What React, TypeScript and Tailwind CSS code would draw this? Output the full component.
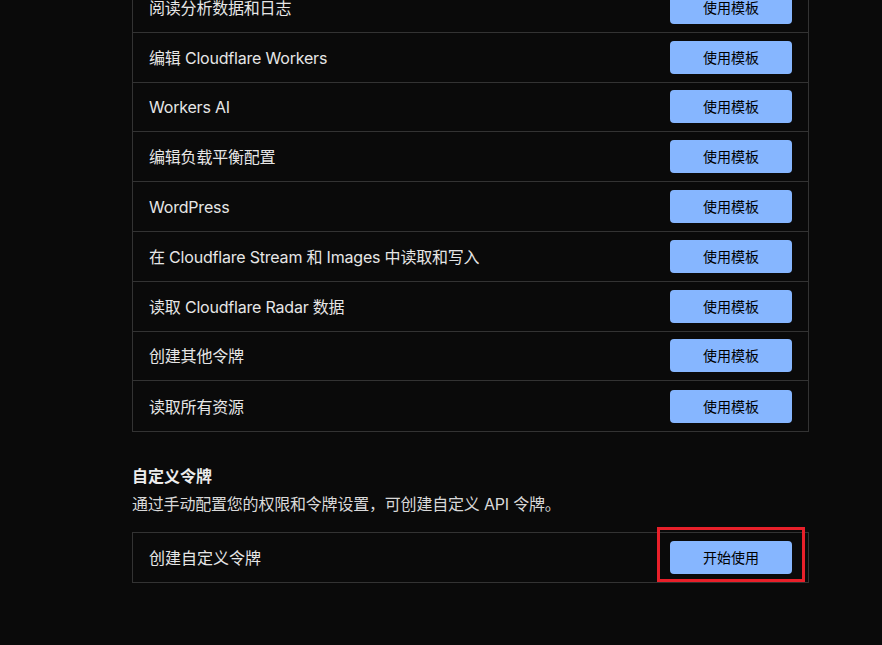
import React from "react";

const rows = [
  "阅读分析数据和日志",
  "编辑 Cloudflare Workers",
  "Workers AI",
  "编辑负载平衡配置",
  "WordPress",
  "在 Cloudflare Stream 和 Images 中读取和写入",
  "读取 Cloudflare Radar 数据",
  "创建其他令牌",
  "读取所有资源",
];

const font = { fontFamily: '"Inter", "Noto Sans CJK SC", "Noto Sans", sans-serif' };

function Btn({ label }: { label: string }) {
  return (
    <button className="h-[33px] w-[122px] rounded-[4px] bg-[#86b6ff] text-[14px] text-black">
      {label}
    </button>
  );
}

export default function App() {
  return (
    <div className="h-[645px] w-[882px] overflow-hidden bg-[#0a0a0a]" style={font}>
      <div className="ml-[132px] w-[677px] -mt-[17px]">
        <div className="border border-[#333333] border-t-0">
          {rows.map((r, i) => (
            <div
              key={i}
              className={`flex h-[49.8px] items-center justify-between pl-4 pr-4 ${i < rows.length - 1 ? "border-b border-[#333333]" : ""}`}
            >
              <span className="pt-[1px] text-[16px] tracking-[-0.2px] text-[#e6e6e6]">{r}</span>
              <Btn label="使用模板" />
            </div>
          ))}
        </div>
        <div className="mt-[32px] text-[16px] font-bold leading-[24px] text-[#ededed]">自定义令牌</div>
        <div className="mt-[4px] text-[16px] leading-[24px] tracking-[-0.2px] text-[#d9d9d9]">
          通过手动配置您的权限和令牌设置，可创建自定义 API 令牌。
        </div>
        <div className="mt-[16px] flex h-[51px] items-center justify-between border border-[#333333] pl-4 pr-4">
          <span className="pt-[1px] text-[16px] text-[#e6e6e6]">创建自定义令牌</span>
          <div className="relative">
            <Btn label="开始使用" />
            <div className="pointer-events-none absolute -left-[13px] -right-[13px] -top-[14px] -bottom-[8px] border-[3px] border-[#e8202a]" />
          </div>
        </div>
      </div>
    </div>
  );
}
